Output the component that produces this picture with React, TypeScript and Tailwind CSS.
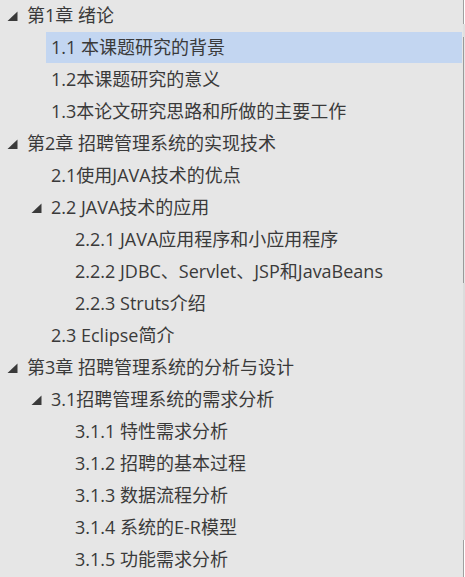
import React from "react";

type Item = { text: string; level: number; expand?: boolean; active?: boolean };

const items: Item[] = [
  { text: "第1章 绪论", level: 0, expand: true },
  { text: "1.1 本课题研究的背景", level: 1, active: true },
  { text: "1.2本课题研究的意义", level: 1 },
  { text: "1.3本论文研究思路和所做的主要工作", level: 1 },
  { text: "第2章 招聘管理系统的实现技术", level: 0, expand: true },
  { text: "2.1使用JAVA技术的优点", level: 1 },
  { text: "2.2 JAVA技术的应用", level: 1, expand: true },
  { text: "2.2.1 JAVA应用程序和小应用程序", level: 2 },
  { text: "2.2.2 JDBC、Servlet、JSP和JavaBeans", level: 2 },
  { text: "2.2.3 Struts介绍", level: 2 },
  { text: "2.3 Eclipse简介", level: 1 },
  { text: "第3章 招聘管理系统的分析与设计", level: 0, expand: true },
  { text: "3.1招聘管理系统的需求分析", level: 1, expand: true },
  { text: "3.1.1 特性需求分析", level: 2 },
  { text: "3.1.2 招聘的基本过程", level: 2 },
  { text: "3.1.3 数据流程分析", level: 2 },
  { text: "3.1.4 系统的E-R模型", level: 2 },
  { text: "3.1.5 功能需求分析", level: 2 },
];

const Tri = () => (
  <svg width="11" height="11" viewBox="0 0 11 11" className="shrink-0">
    <polygon points="10.5,0.5 10.5,10 0.5,10" fill="#3a3a3a" />
  </svg>
);

const pad = ["pl-[0px]", "pl-[24px]", "pl-[48px]"];

export default function App() {
  return (
    <div
      className="relative w-[465px] h-[577px] overflow-hidden bg-[#e6e6e6] text-[#3a3a3a] text-[18px]"
      style={{ fontFamily: '"Open Sans", "Noto Sans CJK SC", sans-serif' }}
    >
      <div className="flex flex-col -mt-[1px] w-[462px]">
        {items.map((it, i) => (
          <div key={i} className={`flex items-center h-[32px] ${pad[it.level]}`}>
            <div className="w-[22px] flex justify-center pl-[3px] pt-[2px]">{it.expand ? <Tri /> : null}</div>
            <div
              className={`flex-1 flex items-center h-[31px] pl-[5px] whitespace-nowrap leading-none ${
                it.active ? "bg-[#c3d6f1]" : ""
              }`}
            >
              {it.text}
            </div>
          </div>
        ))}
      </div>
      <div className="absolute right-0 top-0 w-[2px] h-[577px] bg-[#e0e0e0]">
        <div className="h-[24px] bg-white border-l border-[#a0a0a0]" />
        <div className="h-[13px]" />
        <div className="h-[246px] bg-[#e6e6e6] border-l border-[#9a9a9a]" />
        <div className="h-[257px] bg-[#dcdcdc]" />
        <div className="h-[37px] bg-white border-l border-[#a0a0a0]" />
      </div>
    </div>
  );
}
